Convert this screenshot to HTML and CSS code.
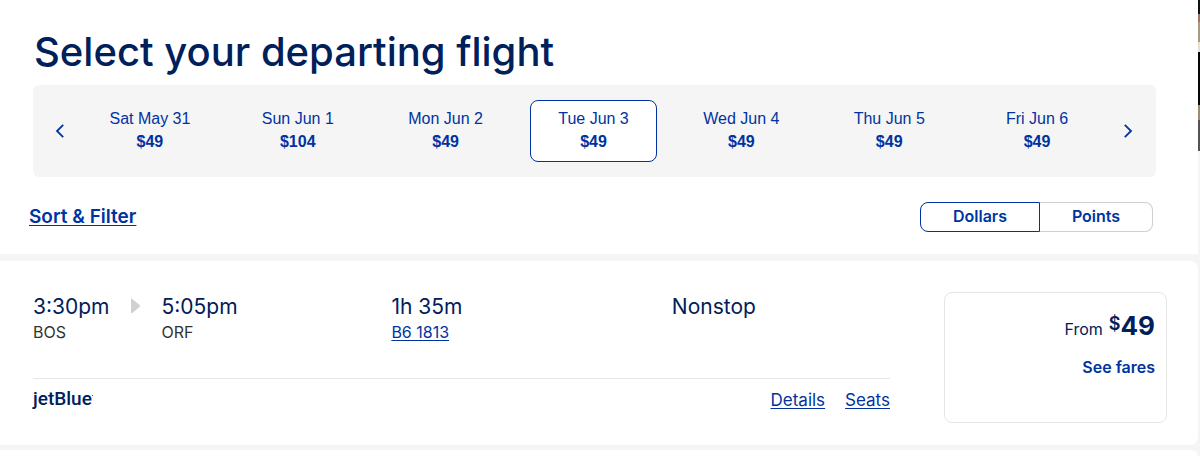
FILE: index.html
```html
<!DOCTYPE html>
<html lang="en">
<head>
    <meta charset="UTF-8">
    <meta name="viewport" content="width=device-width, initial-scale=1.0">
    <title>Select your departing flight</title>
    <link rel="stylesheet" href="styles.css">
</head>
<body>
    <div class="photo-edge"></div>

    <header class="search-header">
        <h1>Select your departing flight</h1>

        <nav class="date-bar" aria-label="Departure dates">
            <button type="button" class="arrow" aria-label="Previous dates">
                <svg width="10" height="16" viewBox="0 0 10 16"><path d="M8.2 1.8 2 8 8.2 14.2" fill="none" stroke="currentColor" stroke-width="1.8"/></svg>
            </button>
            <div class="dates">
                <button type="button" class="date">Sat May 31<strong>$49</strong></button>
                <button type="button" class="date">Sun Jun 1<strong>$104</strong></button>
                <button type="button" class="date">Mon Jun 2<strong>$49</strong></button>
                <button type="button" class="date selected" aria-current="date">Tue Jun 3<strong>$49</strong></button>
                <button type="button" class="date">Wed Jun 4<strong>$49</strong></button>
                <button type="button" class="date">Thu Jun 5<strong>$49</strong></button>
                <button type="button" class="date">Fri Jun 6<strong>$49</strong></button>
            </div>
            <button type="button" class="arrow" aria-label="Next dates">
                <svg width="10" height="16" viewBox="0 0 10 16"><path d="M1.8 1.8 8 8 1.8 14.2" fill="none" stroke="currentColor" stroke-width="1.8"/></svg>
            </button>
        </nav>

        <div class="toolbar">
            <a href="#" class="sort-link">Sort &amp; Filter</a>
            <div class="toggle" role="group" aria-label="Show fares in">
                <button type="button" class="toggle-option active" aria-pressed="true">Dollars</button>
                <button type="button" class="toggle-option" aria-pressed="false">Points</button>
            </div>
        </div>
    </header>

    <main>
        <article class="flight">
            <div class="flight-main">
                <div class="flight-info">
                    <div class="times">
                        <div>
                            <div class="value">3:30pm</div>
                            <div class="airport">BOS</div>
                        </div>
                        <svg class="triangle" width="10" height="16" viewBox="0 0 10 16"><path d="M0 1.5Q0 0 1.3 1L8.8 7.2Q9.6 8 8.8 8.8L1.3 15Q0 16 0 14.5Z" fill="#d0d0d0"/></svg>
                        <div>
                            <div class="value">5:05pm</div>
                            <div class="airport">ORF</div>
                        </div>
                    </div>
                    <div>
                        <div class="value">1h 35m</div>
                        <a href="#" class="flight-number">B6 1813</a>
                    </div>
                    <div class="value">Nonstop</div>
                </div>
                <div class="flight-footer">
                    <div class="logo">jetBlue<svg width="1" height="1" viewBox="0 0 1 1"><circle cx=".5" cy=".5" r=".5" fill="#00205b"/></svg></div>
                    <div class="links">
                        <a href="#">Details</a>
                        <a href="#">Seats</a>
                    </div>
                </div>
            </div>
            <button type="button" class="fare">
                <span class="price">
                    <span class="from">From</span>
                    <span class="currency">$</span>
                    <span class="amount">49</span>
                </span>
                <span class="see-fares">See fares</span>
            </button>
        </article>
        <article class="flight next"></article>
    </main>
</body>
</html>
```
FILE: styles.css
```css
* {
    box-sizing: border-box;
}
body {
    margin: 0;
    padding-right: 2px;
    background-color: #f5f5f5;
    color: #00205b;
    font-family: Inter, sans-serif;
    font-size: 16px;
    min-height: 100vh;
    display: flex;
    flex-direction: column;
}
button {
    font: inherit;
    color: #0033a0;
    background: none;
    border: none;
    padding: 0;
    cursor: pointer;
}
a {
    color: #0033a0;
    text-underline-offset: 2px;
}
/* sliver of the banner photo behind the page */
.photo-edge {
    position: absolute;
    top: 0;
    right: 0;
    width: 2px;
    height: 151px;
    background: linear-gradient(#111 0 14px, #a07468 14px 22px, #a99a82 22px 42px, #e6dfcd 42px 52px, #060606 52px 105px, #9a8b74 105px 120px, #55525a 120px);
}
.search-header {
    background-color: #fff;
    padding: 25px 42px 22px 33px;
}
h1 {
    margin: 0;
    padding-left: 1px;
    font-size: 40px;
    line-height: 54px;
    font-weight: 500;
    margin-bottom: 6px;
}
.date-bar {
    display: flex;
    align-items: center;
    background-color: #f5f5f5;
    border-radius: 6px;
    padding: 15px 2px 15px 0;
}
.arrow {
    width: 53px;
    height: 40px;
    display: flex;
    align-items: center;
    justify-content: center;
}
.dates {
    flex: 1;
    display: grid;
    grid-template-columns: repeat(7, 1fr);
    gap: 20px;
}
.date {
    height: 62px;
    border: 1px solid #f5f5f5;
    border-radius: 8px;
    font-family: "Liberation Sans", Arial, sans-serif;
    line-height: 23px;
    padding-bottom: 2px;
}
.date strong {
    display: block;
}
.date.selected {
    background-color: #fff;
    border-color: #0033a0;
}
.toolbar {
    display: flex;
    justify-content: space-between;
    align-items: center;
    margin: 25px 3px 0 -4px;
}
.sort-link {
    font-size: 19px;
    line-height: 30px;
    font-weight: 600;
}
.toggle {
    display: flex;
}
.toggle-option {
    width: 113px;
    height: 30px;
    border: 1px solid #d0d0d0;
    border-left: none;
    border-radius: 0 8px 8px 0;
    font-weight: 600;
    padding-bottom: 3px;
}
.toggle-option.active {
    width: 120px;
    border: 1px solid #0033a0;
    border-radius: 8px 0 0 8px;
}
main {
    flex: 1;
    display: flex;
    flex-direction: column;
    gap: 5px;
    padding-top: 7px;
}
.flight {
    display: flex;
    gap: 54px;
    padding: 31px 31px 22px 33px;
    background-color: #fff;
    border-radius: 0 8px 8px 0;
}
.flight.next {
    flex: 1;
    padding: 0;
    border-radius: 0 8px 0 0;
}
.flight-main {
    flex: 1;
}
.flight-info {
    display: grid;
    grid-template-columns: 23fr 18fr 14fr;
    height: 87px;
    border-bottom: 1px solid #e6e6e6;
}
.times {
    display: flex;
    align-items: flex-start;
}
.triangle {
    margin: 6px 21px 0 21px;
}
.value {
    font-size: 21px;
    line-height: 30px;
}
.airport, .flight-number {
    line-height: 20px;
}
.airport {
    color: #333;
}
.flight-footer {
    display: flex;
    justify-content: space-between;
    padding-top: 8px;
}
.logo {
    font-family: Roboto, sans-serif;
    font-size: 19px;
    line-height: 24px;
    font-weight: 500;
}
.logo svg {
    vertical-align: 9px;
}
.links {
    display: flex;
    gap: 20px;
    font-size: 17px;
    line-height: 26px;
}
.fare {
    width: 223px;
    height: 131px;
    border: 1px solid #e6e6e6;
    border-radius: 8px;
    padding: 17px 11px;
    display: flex;
    flex-direction: column;
    align-items: flex-end;
    gap: 10px;
}
.price {
    display: flex;
    align-items: baseline;
    color: #00205b;
    line-height: 32px;
}
.from {
    margin-right: 6px;
}
.currency {
    align-self: flex-start;
    font-size: 18px;
    line-height: 28px;
    font-weight: 600;
}
.amount {
    font-size: 26px;
    font-weight: 700;
}
.see-fares {
    font-weight: 600;
    line-height: 24px;
}
```
